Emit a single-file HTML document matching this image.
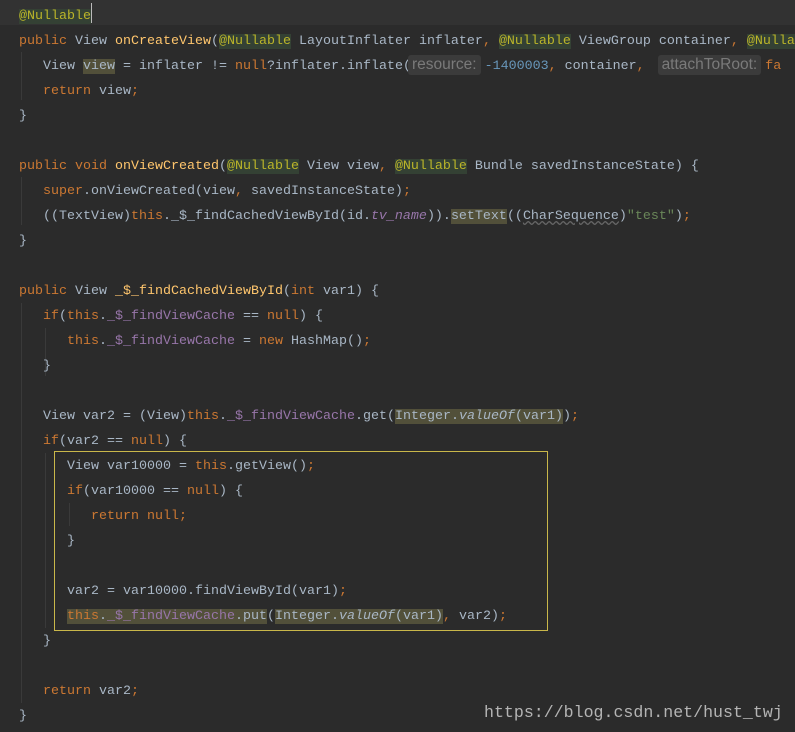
<!DOCTYPE html>
<html><head><meta charset="utf-8"><style>
body{margin:0;width:795px;height:732px;background:#2b2b2b;overflow:hidden;position:relative;font-family:"Liberation Mono",monospace;font-size:13.33px;color:#a9b7c6}
.l{position:absolute;left:0;height:25px;line-height:25px;white-space:pre}
.k{color:#cc7832}.a{color:#bbb529;background:#344134}.n{color:#6897bb}.s{color:#6a8759}.f{color:#9876aa}.m{color:#ffc66d}.i{font-style:italic}
.hl{background:#52503a}
.h{display:inline-block;background:#3b3b3b;color:#7a7a7a;font-family:"Liberation Sans",sans-serif;font-size:15.5px;line-height:20px;padding:0 4px;border-radius:3px;margin:0 4px 0 -3px}
.g{position:absolute;width:1px;background:#3a3a3a}
.u{text-decoration:underline wavy #666}
</style></head><body>
<div style="position:absolute;left:0;top:0;width:795px;height:25px;background:#323232"></div>
<div style="position:absolute;left:91px;top:3px;width:1px;height:20px;background:#bbb"></div>
<div class="g" style="left:21px;top:52px;height:48px"></div>
<div class="g" style="left:21px;top:177px;height:48px"></div>
<div class="g" style="left:21px;top:303px;height:400px"></div>
<div class="g" style="left:45px;top:328px;height:48px"></div>
<div class="g" style="left:45px;top:453px;height:175px"></div>
<div class="g" style="left:69px;top:503px;height:23px"></div>
<div style="position:absolute;left:54px;top:451px;width:492px;height:178px;border:1px solid #c9b74a"></div>

<div class="l" style="top:4px;left:19px"><span class="a">@Nullable</span></div>
<div class="l" style="top:29px;left:19px"><span class="k">public </span>View <span class="m">onCreateView</span>(<span class="a">@Nullable</span> LayoutInflater inflater<span class="k">, </span><span class="a">@Nullable</span> ViewGroup container<span class="k">, </span><span class="a">@Nulla</span></div>
<div class="l" style="top:54px;left:43px">View <span class="hl">view</span> = inflater != <span class="k">null</span>?inflater.inflate(<span class="h">resource:</span><span class="n">-1400003</span><span class="k">, </span>container<span class="k">, </span> <span class="h">attachToRoot:</span><span class="k">fa</span></div>
<div class="l" style="top:79px;left:43px"><span class="k">return </span>view<span class="k">;</span></div>
<div class="l" style="top:104px;left:19px">}</div>
<div class="l" style="top:154px;left:19px"><span class="k">public void </span><span class="m">onViewCreated</span>(<span class="a">@Nullable</span> View view<span class="k">, </span><span class="a">@Nullable</span> Bundle savedInstanceState) {</div>
<div class="l" style="top:179px;left:43px"><span class="k">super</span>.onViewCreated(view<span class="k">, </span>savedInstanceState)<span class="k">;</span></div>
<div class="l" style="top:204px;left:43px">((TextView)<span class="k">this</span>._$_findCachedViewById(id.<span class="f i">tv_name</span>)).<span class="hl">setText</span>((<span class="u">CharSequence</span>)<span class="s">"test"</span>)<span class="k">;</span></div>
<div class="l" style="top:229px;left:19px">}</div>
<div class="l" style="top:279px;left:19px"><span class="k">public </span>View <span class="m">_$_findCachedViewById</span>(<span class="k">int </span>var1) {</div>
<div class="l" style="top:304px;left:43px"><span class="k">if</span>(<span class="k">this</span>.<span class="f">_$_findViewCache</span> == <span class="k">null</span>) {</div>
<div class="l" style="top:329px;left:67px"><span class="k">this</span>.<span class="f">_$_findViewCache</span> = <span class="k">new </span>HashMap()<span class="k">;</span></div>
<div class="l" style="top:354px;left:43px">}</div>
<div class="l" style="top:404px;left:43px">View var2 = (View)<span class="k">this</span>.<span class="f">_$_findViewCache</span>.get(<span class="hl">Integer.<span class="i">valueOf</span>(var1)</span>)<span class="k">;</span></div>
<div class="l" style="top:429px;left:43px"><span class="k">if</span>(var2 == <span class="k">null</span>) {</div>
<div class="l" style="top:454px;left:67px">View var10000 = <span class="k">this</span>.getView()<span class="k">;</span></div>
<div class="l" style="top:479px;left:67px"><span class="k">if</span>(var10000 == <span class="k">null</span>) {</div>
<div class="l" style="top:504px;left:91px"><span class="k">return null;</span></div>
<div class="l" style="top:529px;left:67px">}</div>
<div class="l" style="top:579px;left:67px">var2 = var10000.findViewById(var1)<span class="k">;</span></div>
<div class="l" style="top:604px;left:67px"><span class="hl"><span class="k">this</span>.<span class="f">_$_findViewCache</span>.put</span>(<span class="hl">Integer.<span class="i">valueOf</span>(var1)</span><span class="k">, </span>var2)<span class="k">;</span></div>
<div class="l" style="top:629px;left:43px">}</div>
<div class="l" style="top:679px;left:43px"><span class="k">return </span>var2<span class="k">;</span></div>
<div class="l" style="top:704px;left:19px">}</div>
<div class="l" style="top:700px;left:484px;color:#b4b4b4;font-size:16.6px;font-family:'Liberation Mono',monospace">https://blog.csdn.net/hust_twj</div>
</body></html>
